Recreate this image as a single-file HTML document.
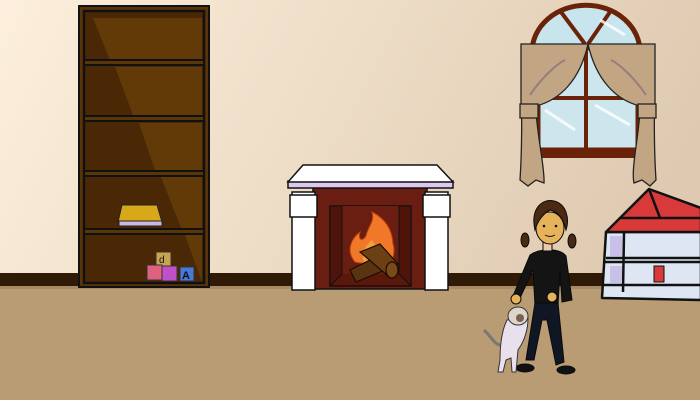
<!DOCTYPE html>
<html><head><meta charset="utf-8"><style>
html,body{margin:0;padding:0;width:700px;height:400px;overflow:hidden}
svg{display:block}
</style></head><body>
<svg width="700" height="400" viewBox="0 0 700 400" xmlns="http://www.w3.org/2000/svg">
<defs>
<linearGradient id="wall" x1="0" y1="0" x2="1" y2="0.3">
<stop offset="0" stop-color="#fcefdc"/><stop offset="1" stop-color="#dfcab1"/>
</linearGradient>
</defs>
<rect width="700" height="400" fill="url(#wall)"/>
<rect y="273" width="700" height="15" fill="#2f1a07"/>
<rect y="287" width="700" height="113" fill="#b99c74"/>
<rect y="286" width="700" height="3" fill="#a98a62"/>

<!-- bookshelf -->
<rect x="79" y="6" width="130" height="281" fill="#5a3408" stroke="#111" stroke-width="2"/>
<rect x="84" y="11" width="120" height="272" fill="#4a2806" stroke="#111" stroke-width="2.5"/>
<g fill="#613a08">
<polygon points="93,18 202,18 202,60 110,60"/>
<polygon points="115,67 202,67 202,115 133,115"/>
<polygon points="139,123 202,123 202,170 155,170"/>
<polygon points="161,177 202,177 202,228 181,228"/>
<polygon points="185,235 202,235 202,282"/>
</g>
<g fill="#5a3508" stroke="#111" stroke-width="2">
<rect x="84" y="60" width="120" height="5"/>
<rect x="84" y="116" width="120" height="5"/>
<rect x="84" y="171" width="120" height="5"/>
<rect x="84" y="229" width="120" height="5"/>
</g>
<!-- book -->
<polygon points="122,205 157,205 162,222 118,222" fill="#d8a818" stroke="#222" stroke-width="1"/>
<rect x="119" y="221" width="43" height="5" fill="#c9b8e0" stroke="#222" stroke-width="1"/>
<!-- blocks -->
<rect x="156" y="252" width="15" height="14" fill="#c8a450" stroke="#333"/>
<rect x="147" y="265" width="15" height="15" fill="#e06080" stroke="#333"/>
<rect x="162" y="266" width="15" height="15" fill="#c050c8" stroke="#333"/>
<rect x="180" y="267" width="14" height="14" fill="#4a78d8" stroke="#333"/>
<text x="182" y="279" font-family="Liberation Sans" font-size="11" font-weight="bold" fill="#111">A</text>
<text x="159" y="263" font-family="Liberation Sans" font-size="10" fill="#111">d</text>

<!-- fireplace -->
<rect x="313" y="186" width="114" height="103" fill="#6a1e12" stroke="#111" stroke-width="1.5"/>
<rect x="330" y="206" width="81" height="80" fill="#5a180c" stroke="#111" stroke-width="1.5"/>
<rect x="342" y="206" width="57" height="68" fill="#6a1e12"/>
<path d="M330,206 L342,206 L342,274 L330,286 Z" fill="#4e140a" stroke="#111"/>
<path d="M411,206 L399,206 L399,274 L411,286 Z" fill="#4e140a" stroke="#111"/>
<path d="M355,262 C345,250 352,238 360,232 C358,240 362,242 366,236 C368,226 375,222 372,212 C384,218 392,228 393,244 C396,252 392,262 388,268 Z" fill="#f07828" stroke="#c04010"/>
<path d="M364,262 C360,250 368,244 372,240 C376,248 382,250 384,262 Z" fill="#f8a040"/>
<g stroke="#1a0c02" stroke-width="1.2">
<polygon points="350,270 378,256 385,270 356,282" fill="#5a3410"/>
<polygon points="360,252 380,244 398,264 388,276" fill="#6a4014"/>
<ellipse cx="392" cy="270" rx="6" ry="8" fill="#7a4a18"/>
</g>
<g stroke="#111" stroke-width="1.5">
<rect x="292" y="192" width="23" height="98" fill="#fff"/>
<rect x="425" y="192" width="23" height="98" fill="#fff"/>
<rect x="290" y="195" width="27" height="22" fill="#fff"/>
<rect x="423" y="195" width="27" height="22" fill="#fff"/>
<rect x="288" y="181" width="165" height="7" fill="#dcc8f0"/>
<polygon points="303,165 437,165 453,182 288,182" fill="#fff"/>
</g>

<!-- window -->
<path d="M532,52 A52,45 0 0 1 640,52 Z" fill="#c8e4ec" stroke="#6a2208" stroke-width="5"/>
<rect x="538" y="48" width="100" height="102" fill="#cde6ee" stroke="#6a2208" stroke-width="5"/>
<rect x="541" y="148" width="95" height="10" fill="#6a2208"/>
<line x1="561" y1="12" x2="585" y2="44" stroke="#6a2208" stroke-width="4"/>
<line x1="610" y1="12" x2="588" y2="44" stroke="#6a2208" stroke-width="4"/>
<line x1="586" y1="48" x2="586" y2="150" stroke="#6a2208" stroke-width="4"/>
<line x1="540" y1="98" x2="636" y2="98" stroke="#6a2208" stroke-width="4"/>
<g stroke="#fff" stroke-width="3" opacity="0.8">
<line x1="545" y1="110" x2="575" y2="130"/><line x1="595" y1="105" x2="630" y2="125"/>
<line x1="600" y1="20" x2="625" y2="35"/><line x1="600" y1="60" x2="630" y2="80"/>
</g>
<g fill="#c2a683" stroke="#222" stroke-width="1.3">
<path d="M521,44 L588,44 C580,80 560,100 536,106 L536,112 C538,140 545,170 544,183 L536,180 L528,186 L520,180 C522,150 522,110 521,104 Z"/>
<path d="M655,44 L588,44 C596,80 616,100 640,106 L640,112 C638,140 631,170 634,183 L642,180 L650,186 L656,180 C654,150 654,110 655,104 Z"/>
<rect x="520" y="104" width="18" height="14"/>
<rect x="638" y="104" width="18" height="14"/>
</g>
<g stroke="#8a6a80" stroke-width="2" fill="none" opacity="0.7">
<path d="M530,95 C540,80 555,65 565,60"/><path d="M646,95 C636,80 621,65 611,60"/>
</g>

<!-- dollhouse -->
<g stroke="#111" stroke-width="2.5" stroke-linejoin="round">
<polygon points="606,232 701,232 701,300 602,298" fill="#dde6f2"/>
<polygon points="649,189 606,232 701,232 701,208" fill="#d83a3a"/>
<line x1="649" y1="189" x2="660" y2="218"/>
<line x1="620" y1="218" x2="700" y2="218"/>
<line x1="606" y1="258" x2="701" y2="258"/>
<line x1="605" y1="262" x2="701" y2="262"/>
<line x1="624" y1="233" x2="623" y2="292"/>
<line x1="603" y1="285" x2="701" y2="285"/>
<rect x="654" y="266" width="10" height="16" fill="#d83a3a" stroke-width="1"/>
</g>
<rect x="610" y="236" width="12" height="20" fill="#c8c0e8"/>
<rect x="610" y="266" width="12" height="17" fill="#c8c0e8"/>

<!-- girl -->
<g stroke="#0a0a0a" stroke-width="1">
<path d="M530,255 C540,248 560,248 566,256 L572,300 L562,302 L560,270 L558,305 L535,305 L533,270 L520,298 L513,296 Z" fill="#141414"/>
<path d="M535,303 L558,303 L564,362 L556,365 L547,320 L542,320 L534,360 L526,360 Z" fill="#111625"/>
<ellipse cx="525" cy="368" rx="9" ry="4" fill="#111"/>
<ellipse cx="566" cy="370" rx="9" ry="4" fill="#111"/>
<ellipse cx="516" cy="299" rx="5" ry="5" fill="#e6b25a"/>
<ellipse cx="552" cy="297" rx="5" ry="5" fill="#e6b25a"/>
<rect x="543" y="242" width="9" height="9" fill="#f0c8b0"/>
<ellipse cx="525" cy="240" rx="4" ry="7" fill="#4a2a14"/>
<ellipse cx="572" cy="241" rx="4" ry="7" fill="#4a2a14"/>
<ellipse cx="550" cy="228" rx="14" ry="16" fill="#e6b25a"/>
<path d="M535,230 C530,208 543,198 554,201 C566,204 570,218 566,230 C563,218 558,212 550,210 C544,213 538,220 535,230 Z" fill="#4a2a14"/>
</g>
<circle cx="544" cy="226" r="1.3" fill="#111"/><circle cx="556" cy="226" r="1.3" fill="#111"/>
<path d="M545,235 Q550,238 555,235" stroke="#111" fill="none"/>
<!-- cat -->
<path d="M507,320 C502,330 500,345 500,360 L498,372 L503,372 L506,360 L511,358 L512,372 L516,372 L518,350 C525,340 528,330 528,318 Z" fill="#e8e0ec" stroke="#333" stroke-width="1"/>
<path d="M500,345 C494,344 490,335 484,330" fill="none" stroke="#777" stroke-width="3"/>
<ellipse cx="518" cy="316" rx="10" ry="9" fill="#ddd4cc" stroke="#333" stroke-width="1"/>
<ellipse cx="520" cy="318" rx="4" ry="4" fill="#7a6050"/>
</svg>
</body></html>
